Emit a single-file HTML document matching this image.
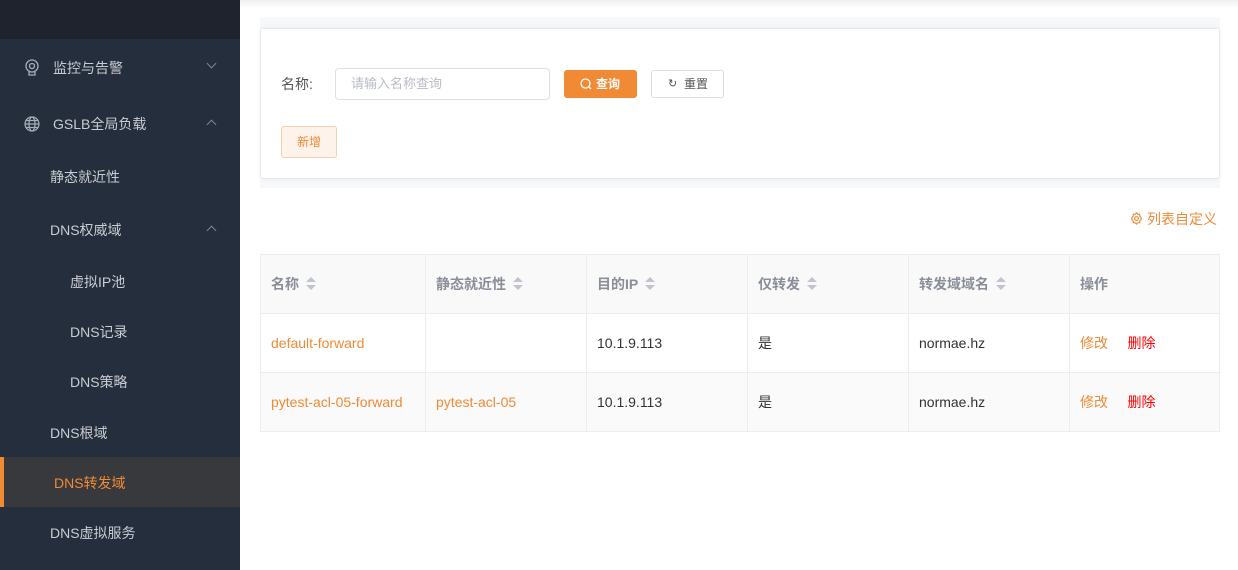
<!DOCTYPE html>
<html><head><meta charset="utf-8"><style>
*{margin:0;padding:0;box-sizing:border-box}
body{width:1238px;height:570px;overflow:hidden;background:#fff;font-family:"Liberation Sans","Noto Sans CJK SC",sans-serif;font-size:14px;position:relative}
.side{position:absolute;left:0;top:0;width:240px;height:570px;background:#252e3d}
.top{height:39px;background:#1e232e}
.mi{position:absolute;left:0;width:240px;color:#c8ccd3;font-size:14px;line-height:20px}
.arrow{position:absolute;left:208px;top:6px;width:7px;height:7px;border-right:1px solid #7d8694;border-bottom:1px solid #7d8694}
.main{position:absolute;left:260px;top:17px;width:960px;height:171px;background:#f7f8fa}
.card{position:absolute;left:260px;top:28px;width:960px;height:151px;background:#fff;border:1px solid #e6e8f0;border-radius:3px;box-shadow:0 0 6px rgba(0,0,0,.05)}
table{position:absolute;left:260px;top:254px;width:960px;border-collapse:collapse;font-size:14px}
td,th{border:1px solid #ebedf2;height:59px;padding:0 10px;text-align:left;color:#333;font-weight:normal}
th{background:#f9f9fa;color:#8a8e99;font-weight:bold}
.o{color:#f08a35}.r{color:#f00}
.s{display:inline-block;width:10px;height:13px;vertical-align:-1px;margin-left:7px;position:relative}
.s:before,.s:after{content:"";position:absolute;left:0;border-left:5px solid transparent;border-right:5px solid transparent}
.s:before{top:0;border-bottom:5px solid #c0c4cc}.s:after{bottom:0;border-top:5px solid #c0c4cc}
</style></head><body>
<div class="side"><div class="top"></div>
<div class="mi" style="top:58px"><svg style="position:absolute;left:24px;top:1px" width="16" height="18" viewBox="0 0 16 18" fill="none" stroke="#a8aeb8" stroke-width="1.3"><circle cx="8" cy="7" r="6"/><circle cx="8" cy="7" r="2.5"/><path d="M5 13v3h6v-3"/></svg><span style="position:absolute;left:53px">监控与告警</span><i class="arrow" style="transform:rotate(45deg);top:2px"></i></div>
<div class="mi" style="top:114px"><svg style="position:absolute;left:24px;top:2px" width="16" height="16" viewBox="0 0 16 16" fill="none" stroke="#a8aeb8" stroke-width="1.2"><circle cx="8" cy="8" r="7"/><ellipse cx="8" cy="8" rx="3" ry="7"/><path d="M1 8h14M2 4.5h12M2 11.5h12"/></svg><span style="position:absolute;left:53px">GSLB全局负载</span><i class="arrow" style="transform:rotate(-135deg);top:7px"></i></div>
<div class="mi" style="top:167px"><span style="position:absolute;left:50px">静态就近性</span></div>
<div class="mi" style="top:220px"><span style="position:absolute;left:50px">DNS权威域</span><i class="arrow" style="transform:rotate(-135deg);top:7px"></i></div>
<div class="mi" style="top:272px"><span style="position:absolute;left:70px">虚拟IP池</span></div>
<div class="mi" style="top:322px"><span style="position:absolute;left:70px">DNS记录</span></div>
<div class="mi" style="top:372px"><span style="position:absolute;left:70px">DNS策略</span></div>
<div class="mi" style="top:423px"><span style="position:absolute;left:50px">DNS根域</span></div>
<div style="position:absolute;top:457px;left:0;width:240px;height:50px;background:#38393d;border-left:4px solid #f08a35"></div>
<div class="mi" style="top:473px;color:#f08a35"><span style="position:absolute;left:54px">DNS转发域</span></div>
<div class="mi" style="top:523px"><span style="position:absolute;left:50px">DNS虚拟服务</span></div>
</div>
<div style="position:absolute;left:240px;top:0;width:998px;height:8px;background:linear-gradient(#f0f0f2,#fff)"></div>
<div class="main"></div>
<div class="card">
<span style="position:absolute;left:20px;top:45px;color:#555">名称:</span>
<div style="position:absolute;left:74px;top:39px;width:215px;height:32px;border:1px solid #dcdfe6;border-radius:4px;color:#b8bcc4;padding:5px 15px;font-size:13px;line-height:20px">请输入名称查询</div>
<div style="position:absolute;left:303px;top:41px;width:73px;height:28px;background:#f08a35;border-radius:3px;color:#fff;font-size:12px;font-weight:bold;line-height:28px;padding-left:32px"><svg style="position:absolute;left:16px;top:8px" width="12" height="12" viewBox="0 0 12 12" fill="none" stroke="#fff" stroke-width="1.3"><circle cx="5.5" cy="5.5" r="4.5"/><path d="M9 9l2 2"/></svg>查询</div>
<div style="position:absolute;left:390px;top:41px;width:73px;height:28px;border:1px solid #dcdfe6;border-radius:3px;color:#555;font-size:12px;line-height:26px;padding-left:32px"><span style="position:absolute;left:16px;top:0;font-size:11px">↻</span>重置</div>
<div style="position:absolute;left:20px;top:97px;width:56px;height:32px;background:#fef3ea;border:1px solid #f8cfae;border-radius:3px;color:#f08a35;font-size:12px;text-align:center;line-height:30px">新增</div>
</div>
<div style="position:absolute;left:1130px;top:209px;color:#f08a35;font-size:14px"><svg width="13" height="13" viewBox="0 0 14 14" fill="none" stroke="#f08a35" stroke-width="1.2" style="vertical-align:-1px;margin-right:4px"><path d="M7 1l1.5 1.5h2v2L12 6v2l-1.5 1.5v2h-2L7 13l-1.5-1.5h-2v-2L2 8V6l1.5-1.5v-2h2z"/><circle cx="7" cy="7" r="2"/></svg>列表自定义</div>
<table>
<tr><th style="width:165px">名称<i class="s"></i></th><th style="width:161px">静态就近性<i class="s"></i></th><th style="width:161px">目的IP<i class="s"></i></th><th style="width:161px">仅转发<i class="s"></i></th><th style="width:161px">转发域域名<i class="s"></i></th><th>操作</th></tr>
<tr><td class="o">default-forward</td><td></td><td>10.1.9.113</td><td>是</td><td>normae.hz</td><td><span class="o">修改</span>&nbsp;&nbsp;&nbsp;&nbsp;&nbsp;<span class="r">删除</span></td></tr>
<tr style="background:#fafafa"><td class="o">pytest-acl-05-forward</td><td class="o">pytest-acl-05</td><td>10.1.9.113</td><td>是</td><td>normae.hz</td><td><span class="o">修改</span>&nbsp;&nbsp;&nbsp;&nbsp;&nbsp;<span class="r">删除</span></td></tr>
</table>
</body></html>
